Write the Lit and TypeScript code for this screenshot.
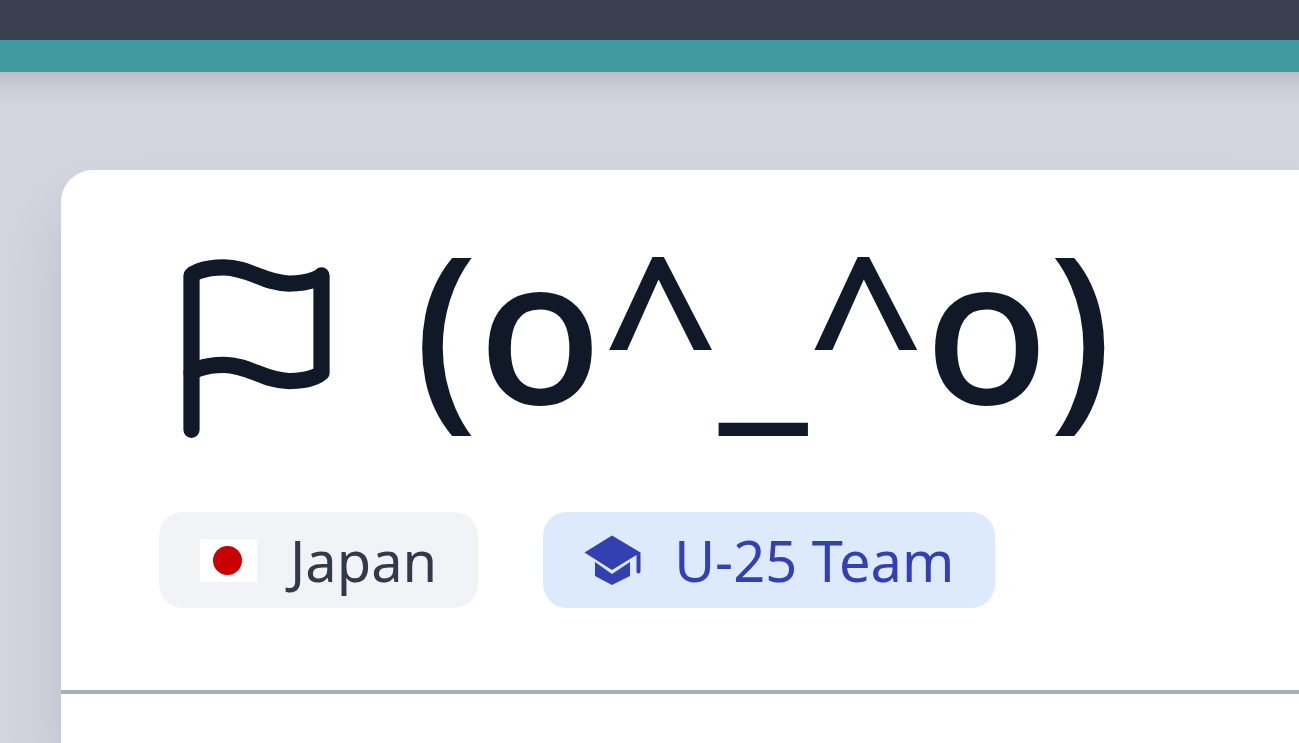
import { LitElement, html, css } from "lit";
import { customElement } from "lit/decorators.js";

@customElement("app-root")
export class AppRoot extends LitElement {
  static styles = css`
    :host {
      display: flex;
      flex-direction: column;
      min-height: 100vh;
      overflow: hidden;
      background: #d2d5de;
      color: #111827;
      font-family: "Noto Sans", "Open Sans", sans-serif;
    }
    .bar {
      height: 40px;
      background: #3b4050;
      border-bottom: 32px solid #409ba0;
      box-shadow: 0 -24px 28px 28px rgba(0, 0, 0, 0.18);
    }
    main {
      flex: 1;
      display: flex;
      padding: 98px 0 0 61px;
    }
    .card {
      flex: 1;
      min-width: 0;
      background: #fff;
      border-top-left-radius: 32px;
      box-shadow: 0 40px 60px rgba(0, 0, 0, 0.1);
    }
    .head {
      padding: 81px 98px 82px;
      border-bottom: 4px solid #a9aebb;
    }
    .title {
      display: flex;
      align-items: flex-start;
      gap: 60px;
      height: 195px;
      margin-bottom: 66px;
    }
    .flag {
      flex: none;
      width: 195px;
      height: 195px;
    }
    h1 {
      margin: 0;
      font-size: 204px;
      line-height: 148px;
      font-weight: 500;
      white-space: nowrap;
    }
    .chips {
      display: flex;
      gap: 65px;
    }
    .chip {
      display: flex;
      align-items: center;
      gap: 33px;
      height: 96px;
      padding: 0 41px;
      border-radius: 24px;
      background: #f2f3f6;
      color: #33394a;
      font-size: 56px;
      white-space: nowrap;
    }
    .team {
      background: #dde9fd;
      color: #3340b2;
    }
    .icon {
      flex: none;
      width: 57px;
      height: 50px;
    }
  `;

  render() {
    return html`
      <header class="bar"></header>
      <main>
        <section class="card">
          <div class="head">
            <div class="title">
              <svg class="flag" viewBox="0 0 24 24" fill="none" stroke="currentColor" stroke-width="2" stroke-linecap="round" stroke-linejoin="round" aria-hidden="true">
                <path d="M4 15s1-1 4-1 5 2 8 2 4-1 4-1V3s-1 1-4 1-5-2-8-2-4 1-4 1z" />
                <path d="M4 22v-7" />
              </svg>
              <h1>(o^_^o)</h1>
            </div>
            <div class="chips">
              <span class="chip">
                <svg class="icon" viewBox="0 0 57 50" aria-hidden="true">
                  <rect y="4" width="57" height="43" fill="#fff" />
                  <circle cx="27.5" cy="25.5" r="14.5" fill="#c90000" />
                </svg>
                Japan
              </span>
              <span class="chip team">
                <svg class="icon" viewBox="0 0 57 50" fill="currentColor" aria-hidden="true">
                  <path d="M28 0.5L0.5 17.5L28 35l22-13.500 2.500-1.500v17q2 3 4 0V17.5z" />
                  <path d="M11 27v14l17 9 18-9V27L28 39z" />
                </svg>
                U-25 Team
              </span>
            </div>
          </div>
        </section>
      </main>
    `;
  }
}
